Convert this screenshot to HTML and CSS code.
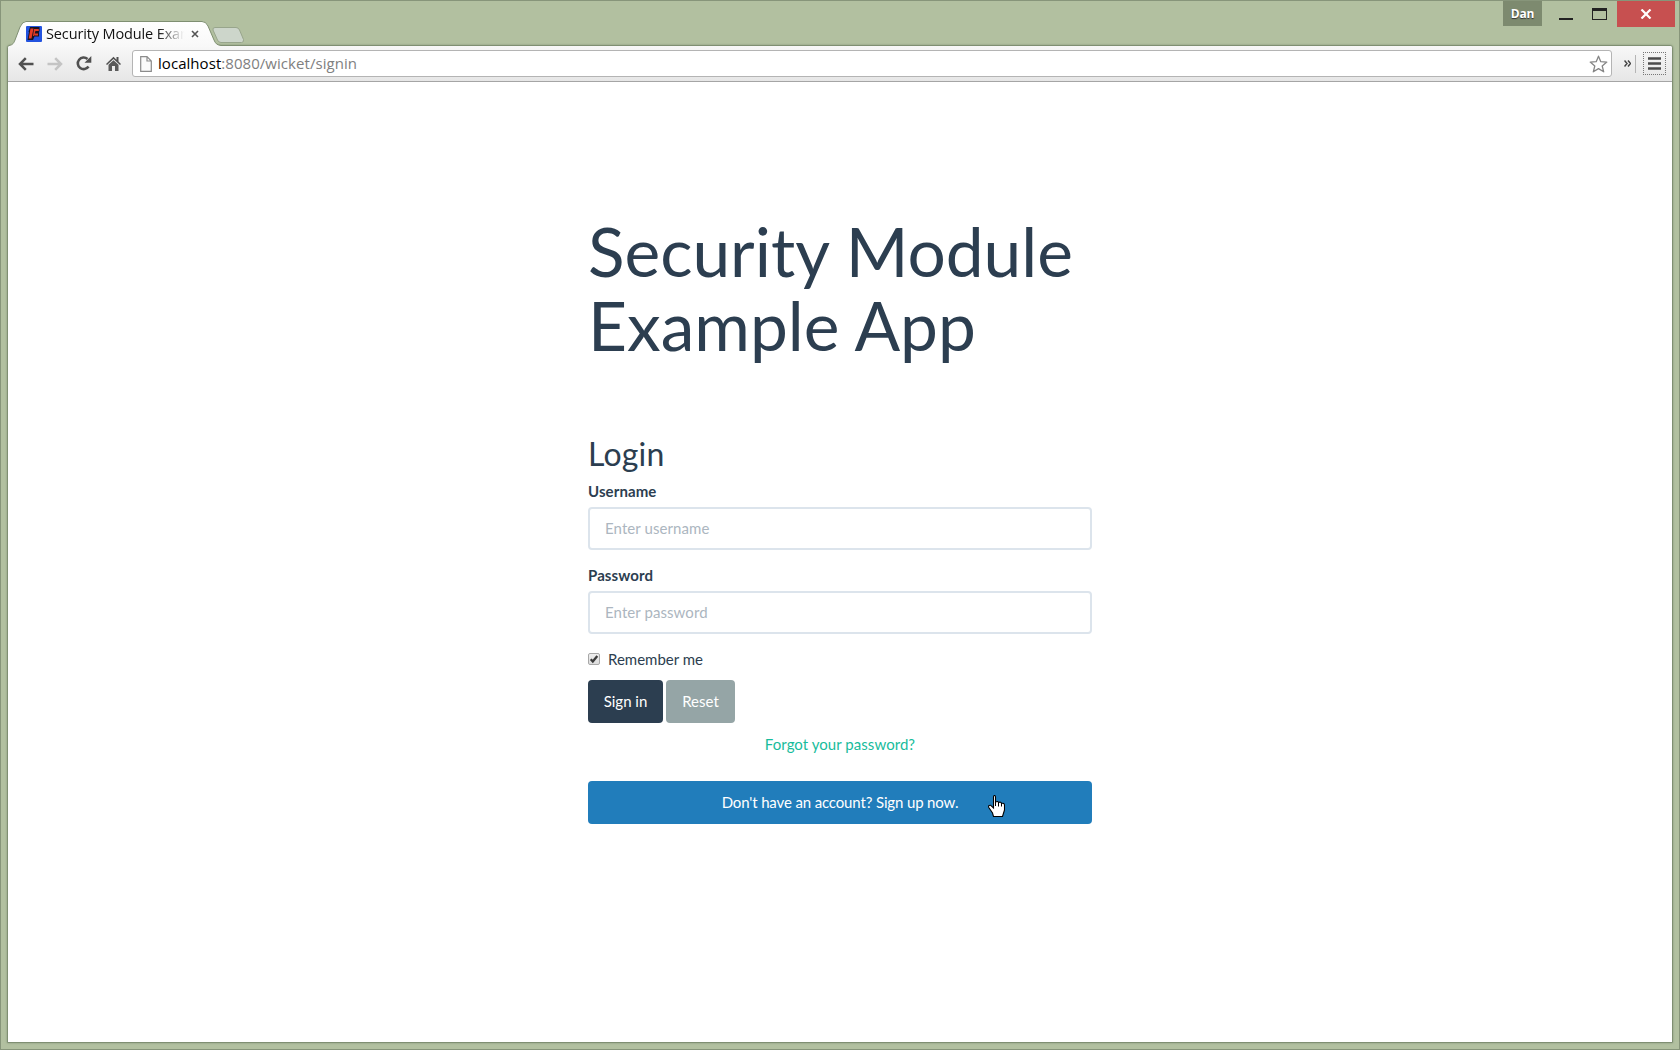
FILE: index.html
```html
<!DOCTYPE html>
<html lang="en">
<head>
<meta charset="utf-8">
<title>Security Module Example App</title>
<link rel="stylesheet" href="styles.css">
</head>
<body>
<div class="window">
  <header class="titlebar">
    <div class="tab">
      <svg class="tab-shape" width="212" height="26" viewBox="0 0 212 26">
        <defs><linearGradient id="tabfill" x1="0" y1="0" x2="0" y2="1"><stop offset="0" stop-color="#fff"/><stop offset="1" stop-color="#f8f8f8"/></linearGradient></defs>
        <path d="M0 26V24.5C4 24 5 21.500 6 19L11 6Q13.500.5 17 .5H193Q197 .5 199 5L205 19C206.500 22.500 208 24 212 24.500V26Z" fill="url(#tabfill)"/>
        <path d="M0 24.500C4 24 5 21.500 6 19L11 6Q13.500.5 17 .5H193Q197 .5 199 5L205 19C206.500 22.500 208 24 212 24.500" fill="none" stroke="#7f8f72"/>
      </svg>
      <svg class="favicon" width="16" height="16" viewBox="0 0 16 16"><rect width="16" height="16" rx="1" fill="#2353df"/><path d="M4 1h9.500v4.500H13v5H8.500L7 14H1.500L3 6H2.500Z" fill="#171321"/><path d="M4.500 2.500h3L5.500 12.500H2.700ZM9 3h3.800v2H9ZM8.500 7.500h3.500v2H8.500ZM8 3h2L8 10H7Z" fill="#e63a24"/></svg>
      <span class="tab-title">Security Module Exar</span>
      <svg class="tab-close" width="8" height="8" viewBox="0 0 8 8"><path d="M1 1l6 6M7 1L1 7" stroke="#555" stroke-width="1.600"/></svg>
    </div>
    <svg class="new-tab" width="33" height="17" viewBox="0 0 33 17"><path d="M3 .5H24Q26.500.5 27.500 3L31.500 12.500Q32 15.500 29.500 15.500H9Q6.500 15.500 5.500 13L1 3Q.5.5 3 .5Z" fill="#cdd6cb" stroke="#98a58c"/></svg>
    <span class="profile">Dan</span>
    <svg class="minimize" width="14" height="20" viewBox="0 0 14 20"><path d="M0 17h14v2H0Z" fill="#222"/></svg>
    <svg class="maximize" width="15" height="12" viewBox="0 0 15 12"><path d="M0 0h15v12H0ZM1 3v8h13V3Z" fill="#222" fill-rule="evenodd"/></svg>
    <span class="close"><svg width="12" height="10" viewBox="0 0 12 10"><path d="M1.500.5l9 9M10.500.5l-9 9" stroke="#fff" stroke-width="2.200"/></svg></span>
  </header>
  <div class="frame">
    <nav class="toolbar">
      <svg class="back" width="16" height="14" viewBox="0 0 16 14"><path d="M15.500 7H2M7.800 1.200L2 7l5.800 5.800" fill="none" stroke="#505050" stroke-width="2.500"/></svg>
      <svg class="forward" width="16" height="14" viewBox="0 0 16 14"><path d="M.5 7H14M8.200 1.200L14 7l-5.800 5.800" fill="none" stroke="#c4c4c4" stroke-width="2.500"/></svg>
      <svg class="reload" width="16" height="15" viewBox="0 0 16 15"><path d="M12.500 10.500A5.800 5.800 0 1 1 11.500 3" fill="none" stroke="#505050" stroke-width="2.600"/><path d="M15.300 0v6.800H8.500Z" fill="#505050"/></svg>
      <svg class="home" width="15" height="15" viewBox="0 0 15 15"><path d="M0 8L7.500.8 10.500 3.700V1h2v4.600L15 8l-1 1-6.500-6L1 9Z" fill="#505050"/><path d="M2.500 8.800l5-4.600 5 4.600V15H9v-5H6v5H2.500Z" fill="#5b5b5b"/></svg>
      <div class="address">
        <svg width="12" height="16" viewBox="0 0 12 16"><path d="M.7.700H7L11.300 5v10.300H.7ZM7 .7V5h4.300" fill="#fafafa" stroke="#8b8b8b" stroke-width="1.200"/></svg>
        <span class="url"><span class="host">localhost</span>:8080/wicket/signin</span>
        <svg class="star" width="19" height="18" viewBox="0 0 19 18"><path d="M9.500 1.200l2.300 5.500 6 .4-4.600 3.900 1.500 5.800-5.200-3.200-5.200 3.200L5.800 11 1.200 7.100l6-.4Z" fill="#fff" stroke="#858585" stroke-width="1.300" stroke-linejoin="round"/></svg>
      </div>
      <svg class="overflow" width="7" height="7" viewBox="0 0 7 7"><path d="M.5.500L3 3.500.5 6.500M4 .5L6.500 3.500 4 6.500" fill="none" stroke="#444" stroke-width="1.500"/></svg>
      <span class="divider"></span>
      <span class="menu"><svg width="13" height="13" viewBox="0 0 13 13"><path d="M0 1.500h13M0 6.500h13M0 11.500h13" stroke="#4b4b4b" stroke-width="2.700"/></svg></span>
    </nav>
    <main class="page">
      <div class="content">
        <h1>Security Module Example App</h1>
        <form class="login">
          <h2>Login</h2>
          <label class="field-label" for="username">Username</label>
          <input class="field" id="username" type="text" placeholder="Enter username">
          <label class="field-label" for="password">Password</label>
          <input class="field" id="password" type="password" placeholder="Enter password">
          <div class="remember">
            <svg width="12" height="12" viewBox="0 0 12 12"><defs><linearGradient id="box" x1="0" y1="0" x2="0" y2="1"><stop offset="0" stop-color="#f0f0f0"/><stop offset="1" stop-color="#dcdcdc"/></linearGradient></defs><rect x=".5" y=".5" width="11" height="11" rx="1.500" fill="url(#box)" stroke="#a8a8a8"/><path d="M2.700 6.300l2.100 2.200L9.300 3" fill="none" stroke="#3c3c3c" stroke-width="2.300"/></svg>
            <span>Remember me</span>
          </div>
          <div class="actions">
            <button class="btn primary" type="button">Sign in</button>
            <button class="btn secondary" type="button">Reset</button>
          </div>
          <a class="forgot">Forgot your password?</a>
          <button class="btn signup" type="button">Don't have an account? Sign up now.
            <svg class="pointer" width="17" height="22" viewBox="0 0 17 22"><path d="M5.500 13V2Q5.500.5 6.500.5T7.500 2V7Q10 5.800 10.500 7.500 13 6.500 13.500 8.500 16.500 7.500 16.500 10.500V15L14.500 21.500H5.500L4.500 18 .8 12.500Q0 10 2.500 10.200L5.500 13Z" fill="#fff" stroke="#000" stroke-width="1.100"/><path d="M7.500 7v4M10.500 7.500v4M13.500 8.500v3" stroke="#000"/></svg>
          </button>
        </form>
      </div>
    </main>
  </div>
</div>
</body>
</html>
```
FILE: styles.css
```css
* { box-sizing: border-box; }
body { margin: 0; font-family: Lato, sans-serif; font-size: 15px; line-height: 21px; color: #2c3e50; }
svg { display: block; flex: none; }
.window { height: 1050px; background: #b2c0a0; border: 1px solid #87957a; padding: 0 6px 6px; display: flex; flex-direction: column; }

.titlebar { height: 44px; flex: none; display: flex; align-items: flex-start; margin-right: -2px; }
.tab { position: relative; z-index: 1; width: 206px; height: 44px; padding: 23px 0 0 19px; display: flex; align-items: flex-start; font-family: "Open Sans", "Noto Sans", sans-serif; }
.tab-shape { position: absolute; left: 2px; top: 20px; }
.favicon, .tab-title, .tab-close { position: relative; }
.favicon { margin-top: 2px; }
.tab-title { width: 138px; margin-left: 4px; overflow: hidden; white-space: nowrap; font-size: 14.5px; line-height: 19px; color: #111; letter-spacing: -.13px; -webkit-mask-image: linear-gradient(90deg, #000 112px, transparent 138px); mask-image: linear-gradient(90deg, #000 112px, transparent 138px); }
.tab-close { margin: 6px 0 0 7px; }
.new-tab { margin: 26px 0 0 -1px; }
.profile { margin-left: auto; width: 39px; height: 25px; background: #7d8a6f; color: #fff; font: bold 12px/25px "Open Sans", sans-serif; letter-spacing: -.2px; text-align: center; text-shadow: 0 1px 1px #333; }
.minimize { margin-left: 17px; }
.maximize { margin: 7px 0 0 19px; }
.close { width: 58px; height: 26px; margin-left: 10px; background: #c75050; display: flex; align-items: center; justify-content: center; }

.frame { flex: 1; min-height: 0; display: flex; flex-direction: column; border: 1px solid #7f8f72; border-radius: 3px 3px 0 0; box-shadow: 0 0 2px #7f8f72; background: #fff; }
.toolbar { height: 36px; flex: none; display: flex; align-items: center; padding: 0 6px 0 10px; background: linear-gradient(#f8f8f8, #e6e6e6); border-bottom: 1px solid #a5a5a5; border-radius: 2px 2px 0 0; }
.forward { margin-left: 13px; }
.reload { margin-left: 13px; }
.home { margin-left: 14px; }
.address { flex: 1; height: 27px; margin-left: 11px; padding: 0 3px 0 7px; display: flex; align-items: center; background: #fff; border: 1px solid #b4b4b4; border-radius: 3px; }
.url { margin: 0 0 2px 6px; font: 15px/20px "Open Sans", sans-serif; color: #808080; white-space: nowrap; letter-spacing: .05px; }
.host { color: #000; }
.star { margin-left: auto; }
.overflow { margin-left: 12px; }
.divider { width: 1px; height: 18px; margin-left: 4px; background: #b5b5b5; }
.menu { width: 23px; height: 23px; margin-left: 7px; border: 1px dotted #777; display: flex; align-items: center; justify-content: center; }

.page { flex: 1; display: flex; justify-content: center; padding-top: 132px; }
.content { width: 504px; }
h1 { margin: 0 0 74px; font-size: 67.600px; line-height: 74px; font-weight: 400; }
.login { display: flex; flex-direction: column; }
h2 { margin: 0 0 10px; font-size: 32px; line-height: 35px; font-weight: 400; letter-spacing: .2px; }
.field-label { margin-bottom: 5px; font-weight: 700; letter-spacing: .1px; }
.field { height: 43px; margin: 0 0 15px; padding: 0 15px 2px; border: 2px solid #dce4ec; border-radius: 4px; font: 15px/21px Lato, sans-serif; letter-spacing: .08px; color: #2c3e50; }
.field::placeholder { color: #acb6c0; opacity: 1; }
.remember { display: flex; align-items: flex-start; gap: 8px; height: 21px; margin-bottom: 10px; padding-top: 0; }
.remember svg { margin-top: 4px; }
.actions { display: flex; gap: 3px; }
.btn { height: 43px; padding: 0; border: 0; border-radius: 4px; color: #fff; font: 15px/21px Lato, sans-serif; }
.primary { width: 75px; background: #2c3e50; }
.secondary { width: 69px; background: #95a5a6; }
.forgot { align-self: center; margin: 11px 0 26px; color: #18bc9c; letter-spacing: .05px; }
.signup { position: relative; background: #217dbb; letter-spacing: -.14px; }
.pointer { position: absolute; left: 400px; top: 14px; }
```
